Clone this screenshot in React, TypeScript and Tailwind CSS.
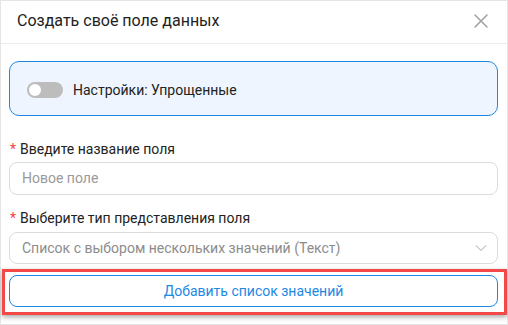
import React from 'react';

const font = { fontFamily: 'Roboto, "Noto Sans", sans-serif' };

function CloseIcon() {
  return (
    <svg width="16" height="16" viewBox="0 0 16 16" fill="none" stroke="#a3a3a3" strokeWidth="1.6" strokeLinecap="round">
      <path d="M2 2 L14 14 M14 2 L2 14" />
    </svg>
  );
}

function Chevron() {
  return (
    <svg width="12" height="8" viewBox="0 0 12 8" fill="none" stroke="#c8c8c8" strokeWidth="1.1">
      <path d="M1 1.5 L6 6.5 L11 1.5" />
    </svg>
  );
}

export default function App() {
  return (
    <div className="w-[508px] h-[325px] overflow-hidden bg-white" style={font}>
      <div className="h-full border border-[#e5e5e5] bg-white">
        {/* Header */}
        <div className="h-[43px] pl-[16px] pr-[18px] pb-[3px] flex items-center justify-between border-b border-[#ececec]">
          <h1 className="text-[16px] text-[#222]">Создать своё поле данных</h1>
          <CloseIcon />
        </div>

        <div className="pl-[8px] pr-[9px] pt-[17px]">
          {/* Settings box */}
          <div className="h-[55px] rounded-[10px] border border-[#1e88e5] bg-[#eef5fe] flex items-center gap-[10px] pl-[17px] pt-[3px]">
            <div className="w-[36px] h-[16px] rounded-full bg-[#bdbdbd] flex items-center px-[2px]">
              <div className="w-[12px] h-[12px] rounded-full bg-white" />
            </div>
            <span className="text-[14px] text-[#222]">Настройки: Упрощенные</span>
          </div>

          {/* Field name */}
          <div className="mt-[24px] flex items-center text-[14px] text-[#222] leading-[18px]">
            <span className="text-[#f04545] w-[11px] pl-[1px]">*</span>
            <span>Введите название поля</span>
          </div>
          <div className="mt-[4px] h-[33px] rounded-[8px] border border-[#dcdcdc] flex items-center px-[12px]">
            <span className="text-[14px] text-[#9a9a9a]">Новое поле</span>
          </div>

          {/* Field type */}
          <div className="mt-[14px] flex items-center text-[14px] text-[#222] leading-[18px]">
            <span className="text-[#f04545] w-[11px] pl-[1px]">*</span>
            <span>Выберите тип представления поля</span>
          </div>
          <div className="mt-[5px] h-[32px] rounded-[8px] border border-[#dcdcdc] flex items-center justify-between pl-[12px] pr-[10px]">
            <span className="text-[14px] text-[#8c8c8c]">Список с выбором нескольких значений (Текст)</span>
            <Chevron />
          </div>

          {/* Add values button with highlight */}
          <div className="relative mt-[11px]">
            <button className="w-full h-[32px] rounded-[8px] border border-[#1e88e5] bg-white text-[14px] text-[#1e88e5]">
              Добавить список значений
            </button>
            <div className="absolute -left-[7px] -right-[9px] -top-[6px] -bottom-[8px] border-[3px] border-[#f24848] shadow-[0_2px_5px_rgba(0,0,0,0.35)] pointer-events-none" />
          </div>
        </div>
      </div>
    </div>
  );
}
